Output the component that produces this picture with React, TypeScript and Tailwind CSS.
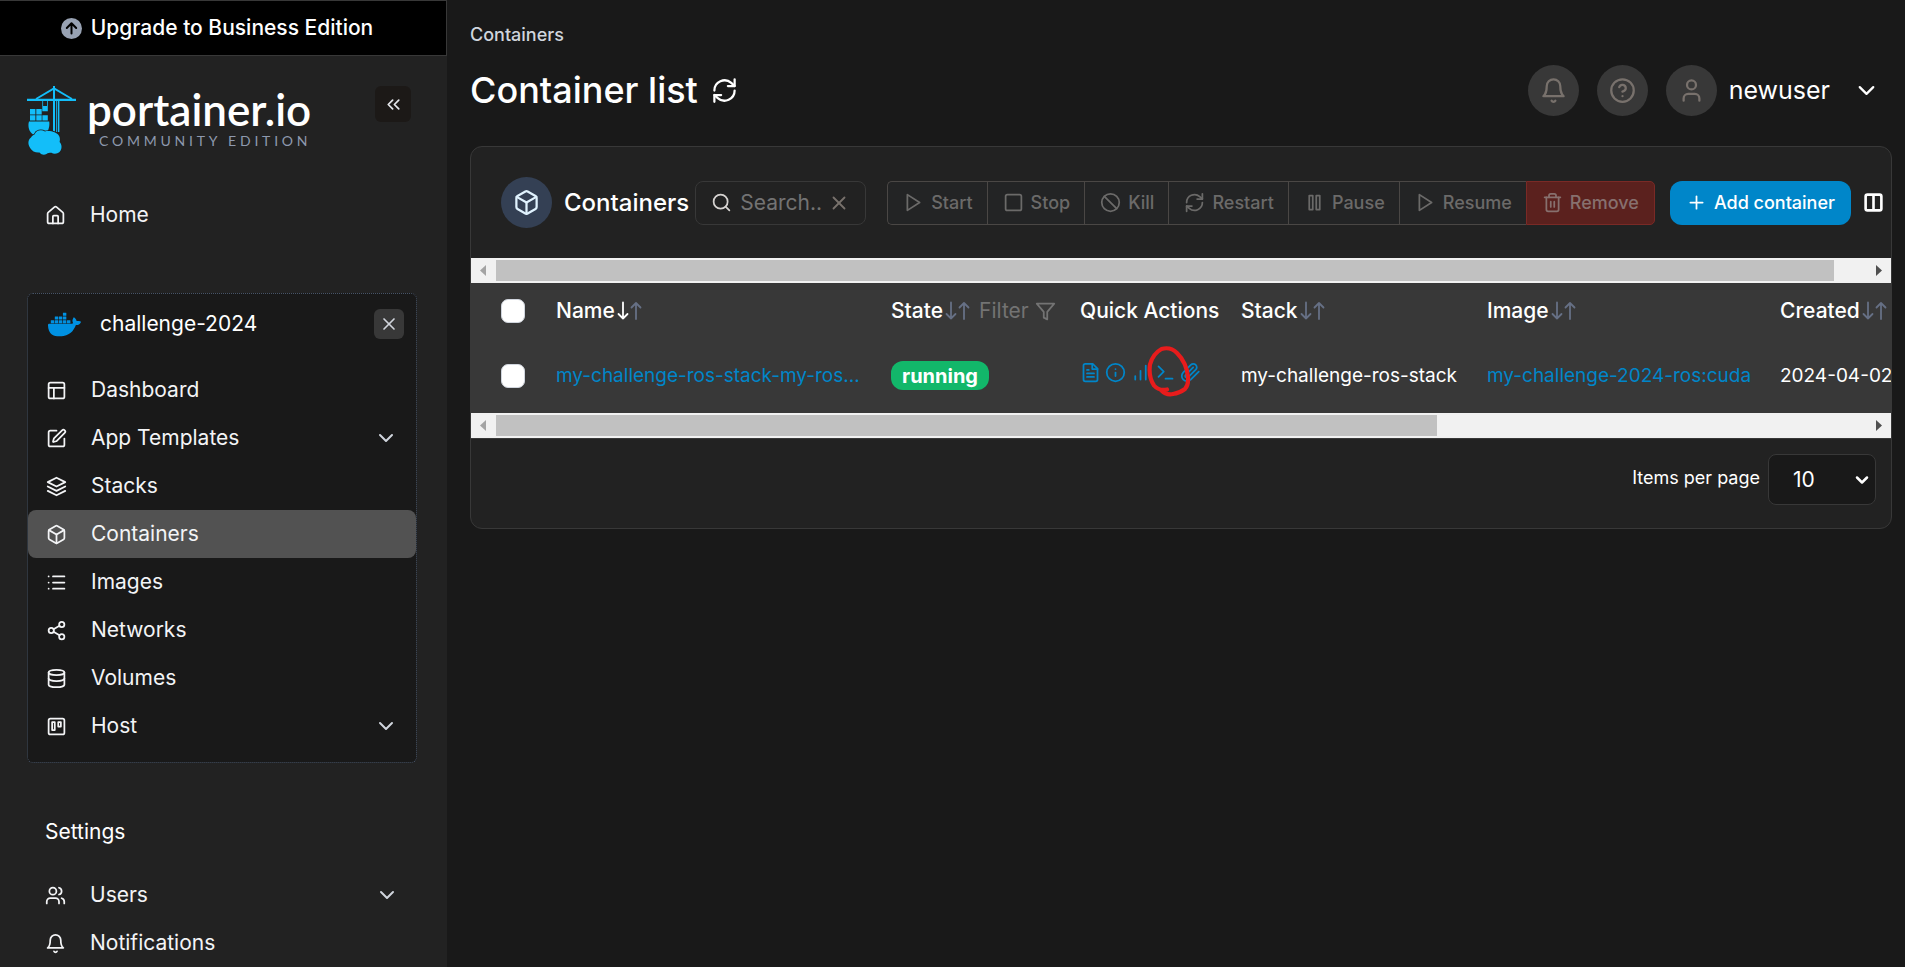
import type { ReactNode } from "react";
import {
  Ban,
  Box,
  ChevronDown,
  ChevronsLeft,
  CircleHelp,
  Database,
  House,
  Info,
  List,
  PanelsTopLeft,
  Plus,
  Search,
  Share2,
  Square,
  SquarePen,
  Trash2,
  Trello,
  User,
  Users,
  X,
} from "lucide-react";
import { SiDocker } from "react-icons/si";

type IconProps = { size?: number; className?: string };

function Stroke({ size = 21, className, children }: IconProps & { children: ReactNode }) {
  return (
    <svg
      width={size}
      height={size}
      viewBox="0 0 24 24"
      fill="none"
      stroke="currentColor"
      strokeWidth="2"
      strokeLinecap="round"
      strokeLinejoin="round"
      className={className}
      aria-hidden="true"
    >
      {children}
    </svg>
  );
}

const Refresh = (p: IconProps) => (
  <Stroke {...p}>
    <path d="M21 2v6h-6" />
    <path d="M3 12a9 9 0 0 1 15-6.7L21 8" />
    <path d="M3 22v-6h6" />
    <path d="M21 12a9 9 0 0 1-15 6.7L3 16" />
  </Stroke>
);
const Layers = (p: IconProps) => (
  <Stroke {...p}>
    <path d="M12 2 2 7l10 5 10-5-10-5Z" />
    <path d="m2 17 10 5 10-5" />
    <path d="m2 12 10 5 10-5" />
  </Stroke>
);
const Bell = (p: IconProps) => (
  <Stroke {...p}>
    <path d="M6 8a6 6 0 0 1 12 0c0 7 3 9 3 9H3s3-2 3-9" />
    <path d="M10.3 21a1.94 1.94 0 0 0 3.4 0" />
  </Stroke>
);
const Play = (p: IconProps) => (
  <Stroke {...p}>
    <path d="m5 3 14 9-14 9V3Z" />
  </Stroke>
);
const Pause = (p: IconProps) => (
  <Stroke {...p}>
    <rect x="6" y="4" width="4" height="16" />
    <rect x="14" y="4" width="4" height="16" />
  </Stroke>
);
const Funnel = (p: IconProps) => (
  <Stroke {...p}>
    <path d="M22 3H2l8 9.46V19l4 2v-8.54L22 3Z" />
  </Stroke>
);
const Logs = (p: IconProps) => (
  <Stroke {...p}>
    <path d="M14.5 2H6a2 2 0 0 0-2 2v16a2 2 0 0 0 2 2h12a2 2 0 0 0 2-2V7.5L14.5 2z" />
    <path d="M14 2v6h6" />
    <path d="M16 13H8M16 17H8M10 9H8" />
  </Stroke>
);
const Stats = (p: IconProps) => (
  <Stroke {...p}>
    <path d="M12 20V10M18 20V4M6 20v-4" />
  </Stroke>
);
const Console = (p: IconProps) => (
  <Stroke {...p}>
    <path d="m4 17 6-6-6-6M12 19h8" />
  </Stroke>
);
const Clip = (p: IconProps) => (
  <Stroke {...p}>
    <path d="m21.44 11.05-9.19 9.19a6 6 0 0 1-8.49-8.49l8.57-8.57A4 4 0 1 1 18 8.84l-8.59 8.57a2 2 0 0 1-2.83-2.83l8.49-8.48" />
  </Stroke>
);
const Columns = (p: IconProps) => (
  <Stroke {...p}>
    <path
      strokeWidth="3"
      d="M12 3h7a2 2 0 0 1 2 2v14a2 2 0 0 1-2 2h-7m0-18H5a2 2 0 0 0-2 2v14a2 2 0 0 0 2 2h7m0-18v18"
    />
  </Stroke>
);

function Crane() {
  return (
    <svg width="49" height="69" viewBox="0 0 49 69" fill="#13bef9" aria-hidden="true">
      <path d="M26 0h2v46h-2zM29.2 15h1v31h-1zM31 15h1.4v31H31zM0 12.8h49v2.2H0z" />
      <path d="M9 13 27 2.4 45 13" fill="none" stroke="#13bef9" strokeWidth="1.8" />
      <path d="M15.3 15h.8v5h-.8zM20 15h.8v5H20zM15.3 20h5.5v5.3h-5.5z" />
      <path d="M3 23h5.4v5.4H3zM9.3 23h5.4v5.4H9.3zM3 29.2h5.4v5.2H3zM9.3 29.2h5.4v5.2H9.3zM15.4 29.2h5.4v5.2h-5.4z" />
      <path d="M2 35.6h20.2c.8 5-1 10-4 13H6c-4-3-5.500-8-4-13Z" />
      <path
        d="M7.500 48.500C9 44.500 14 43 18 45.500c4-1.500 12 .5 13.800 4 1.500 2.500 1.200 4.500.8 6.500 3 3 2.500 9-1.600 11-2.500 1.200-5 .8-6.500-.2-2.500 0-3.500.2-5 1.200-2.500 1.200-5 .8-7-1.500-4 .5-7.500-1.500-9-4C.5 58.500.8 54 4 51.500c.8-1.500 2-2.500 3.500-3Z"
        stroke="#222222"
        strokeWidth="1.600"
        paintOrder="stroke"
      />
    </svg>
  );
}

function Sort({ active = false }: { active?: boolean }) {
  return (
    <svg
      width="26"
      height="20"
      viewBox="0 0 26 20"
      fill="none"
      strokeWidth="1.8"
      strokeLinecap="round"
      strokeLinejoin="round"
      aria-hidden="true"
    >
      <path d="M6 1.500v16M1.500 13 6 17.500l4.500-4.500" stroke={active ? "#ffffff" : "#667085"} />
      <path d="M19 18V2M14.500 6.500 19 2l4.500 4.500" stroke="#667085" />
    </svg>
  );
}

function NavRow({ icon, label, more, active }: { icon: ReactNode; label: string; more?: boolean; active?: boolean }) {
  return (
    <a
      href="#"
      className={`flex h-12 items-center rounded-lg px-[18px] text-[21px] text-gray-100 ${active ? "bg-[#525252]" : ""}`}
    >
      {icon}
      <span className="ml-6 flex-1">{label}</span>
      {more && <ChevronDown size={24} className="text-[#d0d5dd]" />}
    </a>
  );
}

function Sidebar() {
  return (
    <aside className="w-[447px] shrink-0 bg-[#222222]">
      <a
        href="#"
        className="flex h-14 items-center justify-center gap-[9px] border border-l-0 border-[#383838] bg-black pr-3 text-[21px] font-medium text-white"
      >
        <svg width="21" height="21" viewBox="0 0 21 21" aria-hidden="true">
          <circle cx="10.500" cy="10.500" r="10.500" fill="#98a2b3" />
          <path
            d="M10.500 15.500v-10M5.800 10l4.700-4.700 4.700 4.700"
            fill="none"
            stroke="#000"
            strokeWidth="2"
            strokeLinecap="round"
            strokeLinejoin="round"
          />
        </svg>
        Upgrade to Business Edition
      </a>

      <div className="pt-[30px] pr-[30px] pl-[27px]">
        <div className="flex h-[70px] items-start">
          <Crane />
          <div className="ml-[11px] flex-1 font-['Lato',sans-serif]">
            <div className="-mt-0.5 text-[44px] leading-[50px] font-semibold text-white">portainer.io</div>
            <div className="pl-3 text-[14px] leading-[14px] tracking-[0.27em] text-[#8e99ae]">COMMUNITY EDITION</div>
          </div>
          <button
            aria-label="Collapse sidebar"
            className="mr-1.5 flex size-9 items-center justify-center rounded-md bg-[#1c1917] text-gray-200"
          >
            <ChevronsLeft size={21} />
          </button>
        </div>

        <nav className="mt-[35px]">
          <NavRow icon={<House size={21} />} label="Home" />
        </nav>

        <section className="mt-[54px] rounded-md border border-dotted border-[#475467] bg-[#191919] pb-3">
          <div className="mb-3 flex h-[60px] items-center pr-3 pl-5">
            <SiDocker size={33} className="text-[#0091e2]" />
            <span className="ml-[19px] flex-1 text-[21px] text-white">challenge-2024</span>
            <button
              aria-label="Close environment"
              className="flex size-[30px] items-center justify-center rounded-md bg-[#383838] text-gray-300"
            >
              <X size={20} />
            </button>
          </div>
          <nav>
            <NavRow icon={<PanelsTopLeft size={21} />} label="Dashboard" />
            <NavRow icon={<SquarePen size={21} />} label="App Templates" more />
            <NavRow icon={<Layers />} label="Stacks" />
            <NavRow icon={<Box size={21} />} label="Containers" active />
            <NavRow icon={<List size={21} />} label="Images" />
            <NavRow icon={<Share2 size={21} />} label="Networks" />
            <NavRow icon={<Database size={21} />} label="Volumes" />
            <NavRow icon={<Trello size={21} />} label="Host" more />
          </nav>
        </section>

        <h2 className="mt-[45px] flex h-12 items-center pl-[18px] text-[21px] text-white">Settings</h2>
        <nav className="mt-[15px]">
          <NavRow icon={<Users size={21} />} label="Users" more />
          <NavRow icon={<Bell />} label="Notifications" />
        </nav>
      </div>
    </aside>
  );
}

function RoundButton({ label, children }: { label: string; children: ReactNode }) {
  return (
    <button
      aria-label={label}
      className="flex size-[51px] items-center justify-center rounded-full bg-[#383838] text-[#78716c]"
    >
      {children}
    </button>
  );
}

function GroupButton({ icon, label }: { icon: ReactNode; label: string }) {
  return (
    <button
      disabled
      className="flex h-11 items-center gap-[7px] border-y border-l border-[#4a4745] bg-[#232425] pr-3.5 pl-[15px] text-[18px] font-medium text-[#6b6a69] first:rounded-l-[5px]"
    >
      {icon}
      {label}
    </button>
  );
}

function ScrollTrack({ thumb }: { thumb: string }) {
  return (
    <div className="flex h-[25px] items-stretch bg-[#f1f1f1] py-0.5">
      <svg width="25" height="21" viewBox="0 0 25 21" aria-hidden="true">
        <path d="M15 5v11L9 10.500Z" fill="#a3a3a3" />
      </svg>
      <div className="flex-1">
        <div className={`h-full bg-[#c1c1c1] ${thumb}`} />
      </div>
      <svg width="25" height="21" viewBox="0 0 25 21" aria-hidden="true">
        <path d="M10 5v11l6-5.500Z" fill="#505050" />
      </svg>
    </div>
  );
}

function Check({ label }: { label: string }) {
  return (
    <input
      type="checkbox"
      aria-label={label}
      className="block size-6 appearance-none rounded-[7px] border border-[#d0d5dd] bg-white"
    />
  );
}

function SortHeader({ label, active }: { label: string; active?: boolean }) {
  return (
    <button className="flex items-center gap-0.5">
      {label}
      <Sort active={active} />
    </button>
  );
}

function ContainerTable() {
  return (
    <div className="overflow-hidden">
      <table className="w-[2100px] table-fixed bg-[#383838] text-left text-[19px] whitespace-nowrap text-white">
        <colgroup>
          <col className="w-[85px]" />
          <col className="w-[335px]" />
          <col className="w-[189px]" />
          <col className="w-[161px]" />
          <col className="w-[246px]" />
          <col className="w-[293px]" />
          <col />
        </colgroup>
        <thead className="text-[21px]">
          <tr className="h-14">
            <th className="pl-[30px]">
              <Check label="Select all rows" />
            </th>
            <th className="font-medium">
              <SortHeader label="Name" active />
            </th>
            <th className="font-medium">
              <div className="flex items-center gap-2">
                <SortHeader label="State" />
                <button className="flex items-center gap-1.5 font-normal text-[#737373]">
                  Filter
                  <Funnel />
                </button>
              </div>
            </th>
            <th className="font-medium">Quick Actions</th>
            <th className="font-medium">
              <SortHeader label="Stack" />
            </th>
            <th className="font-medium">
              <SortHeader label="Image" />
            </th>
            <th className="font-medium">
              <SortHeader label="Created" />
            </th>
          </tr>
        </thead>
        <tbody>
          <tr className="h-[74px]">
            <td className="pl-[30px]">
              <Check label="Select my-challenge-ros-stack" />
            </td>
            <td>
              <a href="#" className="text-[#0086c9]">
                my-challenge-ros-stack-my-ros...
              </a>
            </td>
            <td>
              <span className="inline-flex h-[29px] items-center rounded-xl bg-[#12b76a] px-[11px] text-[20px] font-bold">
                running
              </span>
            </td>
            <td>
              <div className="relative flex items-center gap-1 pb-2 text-[#0086c9]">
                <a href="#" aria-label="Logs">
                  <Logs />
                </a>
                <a href="#" aria-label="Inspect">
                  <Info size={21} />
                </a>
                <a href="#" aria-label="Stats">
                  <Stats />
                </a>
                <a href="#" aria-label="Exec console">
                  <Console />
                </a>
                <a href="#" aria-label="Attach console">
                  <Clip />
                </a>
                <svg
                  width="44"
                  height="51"
                  viewBox="0 0 44 51"
                  className="absolute -top-4 left-[67px]"
                  fill="none"
                  stroke="#e81c1c"
                  strokeWidth="4.200"
                  strokeLinecap="round"
                  strokeLinejoin="round"
                  aria-hidden="true"
                >
                  <path d="M20 43.500c-5 1-10-.5-13-4-4-6-5-14-4-21C5 11 9 6 14.500 3c5-1.500 11-.5 15.500 4 6 6 10 14 11 24 .5 5-.5 9-3 12-4 3-8 4.500-12 5-4 .8-8 .3-12-4" />
                </svg>
              </div>
            </td>
            <td>my-challenge-ros-stack</td>
            <td>
              <a href="#" className="text-[#0086c9]">
                my-challenge-2024-ros:cuda
              </a>
            </td>
            <td>2024-04-02</td>
          </tr>
        </tbody>
      </table>
    </div>
  );
}

export default function App() {
  return (
    <div className="flex min-h-screen bg-[#191919] font-['Inter',sans-serif]">
      <Sidebar />
      <main className="min-w-0 flex-1 pt-[21px] pr-[13px] pl-[23px]">
        <div className="text-[18px] leading-7 font-medium text-[#d0d5dd]">Containers</div>
        <header className="mt-4 flex h-[51px] items-center">
          <h1 className="pb-0.5 text-[36px] font-medium text-white">Container list</h1>
          <button aria-label="Refresh" className="ml-[13px] text-white">
            <Refresh size={27} />
          </button>
          <div className="ml-auto flex items-center gap-[18px] pr-3">
            <RoundButton label="Notifications">
              <Bell size={27} />
            </RoundButton>
            <RoundButton label="Help">
              <CircleHelp size={27} />
            </RoundButton>
            <button className="flex items-center text-[25px] text-white">
              <span className="mr-3 flex size-[51px] items-center justify-center rounded-full bg-[#383838] text-[#78716c]">
                <User size={27} />
              </span>
              newuser
              <ChevronDown size={27} className="ml-[23px]" />
            </button>
          </div>
        </header>

        <section className="mt-[30px] overflow-hidden rounded-xl border border-[#383838] bg-[#222222]">
          <div className="flex h-[111px] items-center pr-[7px] pl-[30px]">
            <span className="flex size-[51px] shrink-0 items-center justify-center rounded-full bg-[#344054] text-[#e0f2fe]">
              <Box size={27} />
            </span>
            <h2 className="ml-3 text-[24px] font-medium text-white">Containers</h2>
            <label className="ml-1.5 flex h-11 min-w-0 flex-1 items-center rounded-lg border border-[#383838] px-[15px]">
              <Search size={21} className="shrink-0 text-[#d6d3d1]" />
              <input
                type="text"
                aria-label="Search containers"
                placeholder="Search.."
                className="ml-2 w-0 min-w-0 flex-1 bg-transparent text-[21px] text-white outline-none placeholder:text-[#737373]"
              />
              <X size={22} className="shrink-0 text-[#78716c]" />
            </label>
            <div className="ml-[21px] flex">
              <GroupButton icon={<Play />} label="Start" />
              <GroupButton icon={<Square size={21} />} label="Stop" />
              <GroupButton icon={<Ban size={21} />} label="Kill" />
              <GroupButton icon={<Refresh />} label="Restart" />
              <GroupButton icon={<Pause />} label="Pause" />
              <GroupButton icon={<Play />} label="Resume" />
              <button
                disabled
                className="flex h-11 items-center gap-[7px] rounded-r-[5px] border border-[#7a2a26] bg-[#5b211e] px-[15px] text-[18px] font-medium text-[#87706e]"
              >
                <Trash2 size={21} />
                Remove
              </button>
            </div>
            <button className="ml-[15px] flex h-11 shrink-0 items-center gap-[7px] rounded-xl bg-[#0086c9] px-4 text-[18px] font-medium text-white">
              <Plus size={21} />
              Add container
            </button>
            <button aria-label="Columns" className="ml-3 text-white">
              <Columns />
            </button>
          </div>

          <ScrollTrack thumb="w-[97.7%]" />
          <ContainerTable />
          <ScrollTrack thumb="w-[68.7%]" />

          <div className="flex h-[90px] items-start justify-end border-t border-[#383838] pt-[15px] pr-[15px]">
            <label htmlFor="page-size" className="mr-2 text-[18px] leading-[48px] text-white">
              Items per page
            </label>
            <div className="relative">
              <select
                id="page-size"
                defaultValue="10"
                className="h-[51px] w-[108px] appearance-none rounded-lg border border-[#383838] bg-[#191919] pl-6 text-[21px] text-white"
              >
                <option>10</option>
                <option>25</option>
                <option>50</option>
                <option>100</option>
              </select>
              <ChevronDown
                size={20}
                strokeWidth={3}
                className="pointer-events-none absolute top-4 right-1 text-white"
              />
            </div>
          </div>
        </section>
      </main>
    </div>
  );
}
